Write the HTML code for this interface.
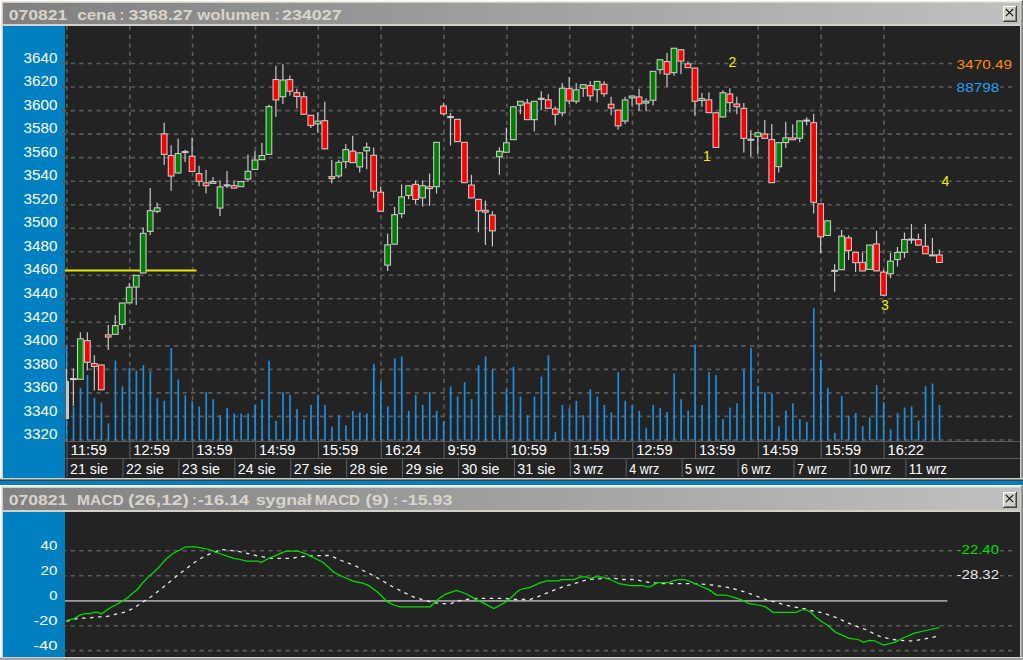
<!DOCTYPE html>
<html><head><meta charset="utf-8">
<style>
html,body{margin:0;padding:0;background:#ffffff;width:1023px;height:660px;overflow:hidden;}
svg{display:block;}
text{font-family:"Liberation Sans", sans-serif;}
</style></head><body>
<svg width="1023" height="660" viewBox="0 0 1023 660">
<defs>
<linearGradient id="tg" x1="0" x2="1" y1="0" y2="0">
<stop offset="0" stop-color="#808080"/><stop offset="1" stop-color="#c0c0c0"/>
</linearGradient>
<clipPath id="c1"><rect x="65" y="26" width="955" height="415"/></clipPath>
<clipPath id="c2"><rect x="65" y="512" width="955" height="145"/></clipPath>
</defs>
<g shape-rendering="crispEdges">

<rect x="0" y="0" width="1023" height="481" fill="#d4d0c8"/>
<rect x="0" y="0" width="2" height="481" fill="#ffffff"/>
<rect x="0" y="0" width="1023" height="2" fill="#ffffff"/>
<rect x="1" y="1" width="1" height="480" fill="#ece9e2"/>
<rect x="1" y="1" width="1021" height="1" fill="#ece9e2"/>
<rect x="1021" y="1" width="1" height="480" fill="#a0a0a0"/>
<rect x="1022" y="0" width="1" height="481" fill="#808080"/>
<rect x="3" y="3" width="1017" height="21" fill="url(#tg)"/>
<rect x="3" y="26" width="62" height="452" fill="#0080c0"/>
<rect x="65" y="26" width="955" height="452" fill="#232323"/>
<rect x="0" y="478" width="1023" height="1" fill="#d4d0c8"/>
<rect x="0" y="479" width="1023" height="1" fill="#808080"/>
<rect x="0" y="480" width="1023" height="1" fill="#404040"/>
<rect x="0" y="481" width="1023" height="4" fill="#0080c0"/>
<rect x="0" y="485" width="1023" height="175" fill="#d4d0c8"/>
<rect x="0" y="485" width="2" height="175" fill="#ffffff"/>
<rect x="0" y="485" width="1023" height="2" fill="#ffffff"/>
<rect x="1" y="486" width="1" height="174" fill="#ece9e2"/>
<rect x="1" y="486" width="1021" height="1" fill="#ece9e2"/>
<rect x="1021" y="486" width="1" height="174" fill="#a0a0a0"/>
<rect x="1022" y="485" width="1" height="175" fill="#808080"/>
<rect x="3" y="488" width="1017" height="22" fill="url(#tg)"/>
<rect x="3" y="512" width="62" height="145" fill="#0080c0"/>
<rect x="65" y="512" width="955" height="145" fill="#232323"/>
<rect x="0" y="657" width="1023" height="1" fill="#d4d0c8"/>
<rect x="0" y="658" width="1023" height="2" fill="#a0a0a0"/>
<rect x="1003" y="6" width="14" height="16" fill="#404040"/>
<rect x="1003" y="6" width="13" height="15" fill="#ffffff"/>
<rect x="1004" y="7" width="12" height="14" fill="#808080"/>
<rect x="1004" y="7" width="11" height="13" fill="#d4d0c8"/>
<path d="M1005.8 9 L1013.2 16.2 M1013.2 9 L1005.8 16.2" stroke="#111" stroke-width="1.05" shape-rendering="geometricPrecision"/>
<rect x="1003" y="492" width="14" height="16" fill="#404040"/>
<rect x="1003" y="492" width="13" height="15" fill="#ffffff"/>
<rect x="1004" y="493" width="12" height="14" fill="#808080"/>
<rect x="1004" y="493" width="11" height="13" fill="#d4d0c8"/>
<path d="M1005.8 495 L1013.2 502.2 M1013.2 495 L1005.8 502.2" stroke="#111" stroke-width="1.05" shape-rendering="geometricPrecision"/>
</g>
<text x="8.8" y="19.8" font-size="15" font-weight="bold" fill="#d8d4cc" textLength="58.5" lengthAdjust="spacingAndGlyphs">070821</text>
<text x="77.2" y="19.8" font-size="15" font-weight="bold" fill="#d8d4cc" textLength="38.8" lengthAdjust="spacingAndGlyphs">cena</text>
<text x="119.60000000000001" y="19.8" font-size="15" font-weight="bold" fill="#d8d4cc" textLength="4.6" lengthAdjust="spacingAndGlyphs">:</text>
<text x="128.5" y="19.8" font-size="15" font-weight="bold" fill="#d8d4cc" textLength="64.1" lengthAdjust="spacingAndGlyphs">3368.27</text>
<text x="197.20000000000002" y="19.8" font-size="15" font-weight="bold" fill="#d8d4cc" textLength="72.8" lengthAdjust="spacingAndGlyphs">wolumen</text>
<text x="275.0" y="19.8" font-size="15" font-weight="bold" fill="#d8d4cc" textLength="4.6" lengthAdjust="spacingAndGlyphs">:</text>
<text x="282.0" y="19.8" font-size="15" font-weight="bold" fill="#d8d4cc" textLength="59.6" lengthAdjust="spacingAndGlyphs">234027</text>
<text x="8.8" y="505" font-size="15" font-weight="bold" fill="#d8d4cc" textLength="58.5" lengthAdjust="spacingAndGlyphs">070821</text>
<text x="77.0" y="505" font-size="15" font-weight="bold" fill="#d8d4cc" textLength="46.7" lengthAdjust="spacingAndGlyphs">MACD</text>
<text x="128.1" y="505" font-size="15" font-weight="bold" fill="#d8d4cc" textLength="60.7" lengthAdjust="spacingAndGlyphs">(26,12)</text>
<text x="192.20000000000002" y="505" font-size="15" font-weight="bold" fill="#d8d4cc" textLength="4.4" lengthAdjust="spacingAndGlyphs">:</text>
<text x="197.8" y="505" font-size="15" font-weight="bold" fill="#d8d4cc" textLength="51.4" lengthAdjust="spacingAndGlyphs">-16.14</text>
<text x="255.70000000000002" y="505" font-size="15" font-weight="bold" fill="#d8d4cc" textLength="56.1" lengthAdjust="spacingAndGlyphs">sygnał</text>
<text x="314.7" y="505" font-size="15" font-weight="bold" fill="#d8d4cc" textLength="45.3" lengthAdjust="spacingAndGlyphs">MACD</text>
<text x="365.2" y="505" font-size="15" font-weight="bold" fill="#d8d4cc" textLength="23.8" lengthAdjust="spacingAndGlyphs">(9)</text>
<text x="393.2" y="505" font-size="15" font-weight="bold" fill="#d8d4cc" textLength="4.4" lengthAdjust="spacingAndGlyphs">:</text>
<text x="401.79999999999995" y="505" font-size="15" font-weight="bold" fill="#d8d4cc" textLength="50.6" lengthAdjust="spacingAndGlyphs">-15.93</text>
<g shape-rendering="crispEdges">
<line x1="62" y1="63.5" x2="1016" y2="63.5" stroke="#5c5c5c" stroke-width="1.6" stroke-dasharray="4.3 4.3" shape-rendering="geometricPrecision"/>
<line x1="62" y1="87.0" x2="1016" y2="87.0" stroke="#5c5c5c" stroke-width="1.6" stroke-dasharray="4.3 4.3" shape-rendering="geometricPrecision"/>
<line x1="62" y1="110.6" x2="1016" y2="110.6" stroke="#5c5c5c" stroke-width="1.6" stroke-dasharray="4.3 4.3" shape-rendering="geometricPrecision"/>
<line x1="62" y1="134.1" x2="1016" y2="134.1" stroke="#5c5c5c" stroke-width="1.6" stroke-dasharray="4.3 4.3" shape-rendering="geometricPrecision"/>
<line x1="62" y1="157.6" x2="1016" y2="157.6" stroke="#5c5c5c" stroke-width="1.6" stroke-dasharray="4.3 4.3" shape-rendering="geometricPrecision"/>
<line x1="62" y1="181.2" x2="1016" y2="181.2" stroke="#5c5c5c" stroke-width="1.6" stroke-dasharray="4.3 4.3" shape-rendering="geometricPrecision"/>
<line x1="62" y1="204.7" x2="1016" y2="204.7" stroke="#5c5c5c" stroke-width="1.6" stroke-dasharray="4.3 4.3" shape-rendering="geometricPrecision"/>
<line x1="62" y1="228.2" x2="1016" y2="228.2" stroke="#5c5c5c" stroke-width="1.6" stroke-dasharray="4.3 4.3" shape-rendering="geometricPrecision"/>
<line x1="62" y1="251.7" x2="1016" y2="251.7" stroke="#5c5c5c" stroke-width="1.6" stroke-dasharray="4.3 4.3" shape-rendering="geometricPrecision"/>
<line x1="62" y1="275.3" x2="1016" y2="275.3" stroke="#5c5c5c" stroke-width="1.6" stroke-dasharray="4.3 4.3" shape-rendering="geometricPrecision"/>
<line x1="62" y1="298.8" x2="1016" y2="298.8" stroke="#5c5c5c" stroke-width="1.6" stroke-dasharray="4.3 4.3" shape-rendering="geometricPrecision"/>
<line x1="62" y1="322.3" x2="1016" y2="322.3" stroke="#5c5c5c" stroke-width="1.6" stroke-dasharray="4.3 4.3" shape-rendering="geometricPrecision"/>
<line x1="62" y1="345.9" x2="1016" y2="345.9" stroke="#5c5c5c" stroke-width="1.6" stroke-dasharray="4.3 4.3" shape-rendering="geometricPrecision"/>
<line x1="62" y1="369.4" x2="1016" y2="369.4" stroke="#5c5c5c" stroke-width="1.6" stroke-dasharray="4.3 4.3" shape-rendering="geometricPrecision"/>
<line x1="62" y1="392.9" x2="1016" y2="392.9" stroke="#5c5c5c" stroke-width="1.6" stroke-dasharray="4.3 4.3" shape-rendering="geometricPrecision"/>
<line x1="62" y1="416.4" x2="1016" y2="416.4" stroke="#5c5c5c" stroke-width="1.6" stroke-dasharray="4.3 4.3" shape-rendering="geometricPrecision"/>
<line x1="62" y1="440.0" x2="1016" y2="440.0" stroke="#5c5c5c" stroke-width="1.6" stroke-dasharray="4.3 4.3" shape-rendering="geometricPrecision"/>
<line x1="66.9" y1="26" x2="66.9" y2="441" stroke="#5c5c5c" stroke-width="1.6" stroke-dasharray="4.3 4.3" shape-rendering="geometricPrecision"/>
<line x1="129.8" y1="26" x2="129.8" y2="441" stroke="#5c5c5c" stroke-width="1.6" stroke-dasharray="4.3 4.3" shape-rendering="geometricPrecision"/>
<line x1="192.6" y1="26" x2="192.6" y2="441" stroke="#5c5c5c" stroke-width="1.6" stroke-dasharray="4.3 4.3" shape-rendering="geometricPrecision"/>
<line x1="255.5" y1="26" x2="255.5" y2="441" stroke="#5c5c5c" stroke-width="1.6" stroke-dasharray="4.3 4.3" shape-rendering="geometricPrecision"/>
<line x1="318.3" y1="26" x2="318.3" y2="441" stroke="#5c5c5c" stroke-width="1.6" stroke-dasharray="4.3 4.3" shape-rendering="geometricPrecision"/>
<line x1="381.1" y1="26" x2="381.1" y2="441" stroke="#5c5c5c" stroke-width="1.6" stroke-dasharray="4.3 4.3" shape-rendering="geometricPrecision"/>
<line x1="444.0" y1="26" x2="444.0" y2="441" stroke="#5c5c5c" stroke-width="1.6" stroke-dasharray="4.3 4.3" shape-rendering="geometricPrecision"/>
<line x1="506.9" y1="26" x2="506.9" y2="441" stroke="#5c5c5c" stroke-width="1.6" stroke-dasharray="4.3 4.3" shape-rendering="geometricPrecision"/>
<line x1="569.7" y1="26" x2="569.7" y2="441" stroke="#5c5c5c" stroke-width="1.6" stroke-dasharray="4.3 4.3" shape-rendering="geometricPrecision"/>
<line x1="632.5" y1="26" x2="632.5" y2="441" stroke="#5c5c5c" stroke-width="1.6" stroke-dasharray="4.3 4.3" shape-rendering="geometricPrecision"/>
<line x1="695.4" y1="26" x2="695.4" y2="441" stroke="#5c5c5c" stroke-width="1.6" stroke-dasharray="4.3 4.3" shape-rendering="geometricPrecision"/>
<line x1="758.2" y1="26" x2="758.2" y2="441" stroke="#5c5c5c" stroke-width="1.6" stroke-dasharray="4.3 4.3" shape-rendering="geometricPrecision"/>
<line x1="821.1" y1="26" x2="821.1" y2="441" stroke="#5c5c5c" stroke-width="1.6" stroke-dasharray="4.3 4.3" shape-rendering="geometricPrecision"/>
<line x1="884.0" y1="26" x2="884.0" y2="441" stroke="#5c5c5c" stroke-width="1.6" stroke-dasharray="4.3 4.3" shape-rendering="geometricPrecision"/>
</g>
<rect x="65" y="269.5" width="131.5" height="2" fill="#e6e600"/>
<g clip-path="url(#c1)">
<rect x="65.68" y="346.4" width="1.7" height="94.1" fill="#1a8ee2"/>
<rect x="72.66" y="406.5" width="1.7" height="34.0" fill="#1a8ee2"/>
<rect x="79.65" y="387.7" width="1.7" height="52.8" fill="#1a8ee2"/>
<rect x="86.63" y="375.0" width="1.7" height="65.5" fill="#1a8ee2"/>
<rect x="93.62" y="398.0" width="1.7" height="42.5" fill="#1a8ee2"/>
<rect x="100.60" y="402.4" width="1.7" height="38.1" fill="#1a8ee2"/>
<rect x="107.58" y="423.5" width="1.7" height="17.0" fill="#1a8ee2"/>
<rect x="114.57" y="360.7" width="1.7" height="79.8" fill="#1a8ee2"/>
<rect x="121.55" y="386.5" width="1.7" height="54.0" fill="#1a8ee2"/>
<rect x="128.54" y="367.8" width="1.7" height="72.7" fill="#1a8ee2"/>
<rect x="135.52" y="370.5" width="1.7" height="70.0" fill="#1a8ee2"/>
<rect x="142.50" y="365.1" width="1.7" height="75.4" fill="#1a8ee2"/>
<rect x="149.49" y="370.7" width="1.7" height="69.8" fill="#1a8ee2"/>
<rect x="156.47" y="398.0" width="1.7" height="42.5" fill="#1a8ee2"/>
<rect x="163.46" y="400.8" width="1.7" height="39.7" fill="#1a8ee2"/>
<rect x="170.44" y="348.0" width="1.7" height="92.5" fill="#1a8ee2"/>
<rect x="177.42" y="379.5" width="1.7" height="61.0" fill="#1a8ee2"/>
<rect x="184.41" y="395.2" width="1.7" height="45.3" fill="#1a8ee2"/>
<rect x="191.39" y="400.8" width="1.7" height="39.7" fill="#1a8ee2"/>
<rect x="198.38" y="406.5" width="1.7" height="34.0" fill="#1a8ee2"/>
<rect x="205.36" y="392.2" width="1.7" height="48.3" fill="#1a8ee2"/>
<rect x="212.34" y="399.3" width="1.7" height="41.2" fill="#1a8ee2"/>
<rect x="219.33" y="415.1" width="1.7" height="25.4" fill="#1a8ee2"/>
<rect x="226.31" y="408.1" width="1.7" height="32.4" fill="#1a8ee2"/>
<rect x="233.30" y="413.5" width="1.7" height="27.0" fill="#1a8ee2"/>
<rect x="240.28" y="413.5" width="1.7" height="27.0" fill="#1a8ee2"/>
<rect x="247.26" y="413.5" width="1.7" height="27.0" fill="#1a8ee2"/>
<rect x="254.25" y="404.9" width="1.7" height="35.6" fill="#1a8ee2"/>
<rect x="261.23" y="399.3" width="1.7" height="41.2" fill="#1a8ee2"/>
<rect x="268.22" y="360.7" width="1.7" height="79.8" fill="#1a8ee2"/>
<rect x="275.20" y="420.8" width="1.7" height="19.7" fill="#1a8ee2"/>
<rect x="282.18" y="392.2" width="1.7" height="48.3" fill="#1a8ee2"/>
<rect x="289.17" y="394.9" width="1.7" height="45.6" fill="#1a8ee2"/>
<rect x="296.15" y="409.2" width="1.7" height="31.3" fill="#1a8ee2"/>
<rect x="303.14" y="419.2" width="1.7" height="21.3" fill="#1a8ee2"/>
<rect x="310.12" y="404.9" width="1.7" height="35.6" fill="#1a8ee2"/>
<rect x="317.10" y="394.9" width="1.7" height="45.6" fill="#1a8ee2"/>
<rect x="324.09" y="404.9" width="1.7" height="35.6" fill="#1a8ee2"/>
<rect x="331.07" y="426.7" width="1.7" height="13.8" fill="#1a8ee2"/>
<rect x="338.06" y="415.1" width="1.7" height="25.4" fill="#1a8ee2"/>
<rect x="345.04" y="425.1" width="1.7" height="15.4" fill="#1a8ee2"/>
<rect x="352.02" y="410.8" width="1.7" height="29.7" fill="#1a8ee2"/>
<rect x="359.01" y="412.4" width="1.7" height="28.1" fill="#1a8ee2"/>
<rect x="365.99" y="413.5" width="1.7" height="27.0" fill="#1a8ee2"/>
<rect x="372.98" y="363.9" width="1.7" height="76.6" fill="#1a8ee2"/>
<rect x="379.96" y="382.2" width="1.7" height="58.3" fill="#1a8ee2"/>
<rect x="386.94" y="406.5" width="1.7" height="34.0" fill="#1a8ee2"/>
<rect x="393.93" y="358.3" width="1.7" height="82.2" fill="#1a8ee2"/>
<rect x="400.91" y="356.4" width="1.7" height="84.1" fill="#1a8ee2"/>
<rect x="407.90" y="410.8" width="1.7" height="29.7" fill="#1a8ee2"/>
<rect x="414.88" y="394.9" width="1.7" height="45.6" fill="#1a8ee2"/>
<rect x="421.86" y="404.9" width="1.7" height="35.6" fill="#1a8ee2"/>
<rect x="428.85" y="392.2" width="1.7" height="48.3" fill="#1a8ee2"/>
<rect x="435.83" y="410.8" width="1.7" height="29.7" fill="#1a8ee2"/>
<rect x="442.82" y="420.8" width="1.7" height="19.7" fill="#1a8ee2"/>
<rect x="449.80" y="386.5" width="1.7" height="54.0" fill="#1a8ee2"/>
<rect x="456.78" y="396.5" width="1.7" height="44.0" fill="#1a8ee2"/>
<rect x="463.77" y="382.2" width="1.7" height="58.3" fill="#1a8ee2"/>
<rect x="470.75" y="399.2" width="1.7" height="41.3" fill="#1a8ee2"/>
<rect x="477.74" y="365.1" width="1.7" height="75.4" fill="#1a8ee2"/>
<rect x="484.72" y="356.4" width="1.7" height="84.1" fill="#1a8ee2"/>
<rect x="491.70" y="369.0" width="1.7" height="71.5" fill="#1a8ee2"/>
<rect x="498.69" y="415.1" width="1.7" height="25.4" fill="#1a8ee2"/>
<rect x="505.67" y="389.3" width="1.7" height="51.2" fill="#1a8ee2"/>
<rect x="512.66" y="366.7" width="1.7" height="73.8" fill="#1a8ee2"/>
<rect x="519.64" y="396.5" width="1.7" height="44.0" fill="#1a8ee2"/>
<rect x="526.62" y="415.1" width="1.7" height="25.4" fill="#1a8ee2"/>
<rect x="533.61" y="396.5" width="1.7" height="44.0" fill="#1a8ee2"/>
<rect x="540.59" y="376.6" width="1.7" height="63.9" fill="#1a8ee2"/>
<rect x="547.58" y="355.1" width="1.7" height="85.4" fill="#1a8ee2"/>
<rect x="554.56" y="432.0" width="1.7" height="8.5" fill="#1a8ee2"/>
<rect x="561.54" y="404.9" width="1.7" height="35.6" fill="#1a8ee2"/>
<rect x="568.53" y="408.1" width="1.7" height="32.4" fill="#1a8ee2"/>
<rect x="575.51" y="400.8" width="1.7" height="39.7" fill="#1a8ee2"/>
<rect x="582.50" y="415.1" width="1.7" height="25.4" fill="#1a8ee2"/>
<rect x="589.48" y="389.3" width="1.7" height="51.2" fill="#1a8ee2"/>
<rect x="596.46" y="396.5" width="1.7" height="44.0" fill="#1a8ee2"/>
<rect x="603.45" y="404.9" width="1.7" height="35.6" fill="#1a8ee2"/>
<rect x="610.43" y="412.4" width="1.7" height="28.1" fill="#1a8ee2"/>
<rect x="617.42" y="372.1" width="1.7" height="68.4" fill="#1a8ee2"/>
<rect x="624.40" y="400.8" width="1.7" height="39.7" fill="#1a8ee2"/>
<rect x="631.38" y="404.9" width="1.7" height="35.6" fill="#1a8ee2"/>
<rect x="638.37" y="410.8" width="1.7" height="29.7" fill="#1a8ee2"/>
<rect x="645.35" y="427.8" width="1.7" height="12.7" fill="#1a8ee2"/>
<rect x="652.34" y="404.9" width="1.7" height="35.6" fill="#1a8ee2"/>
<rect x="659.32" y="408.1" width="1.7" height="32.4" fill="#1a8ee2"/>
<rect x="666.30" y="411.9" width="1.7" height="28.6" fill="#1a8ee2"/>
<rect x="673.29" y="373.6" width="1.7" height="66.9" fill="#1a8ee2"/>
<rect x="680.27" y="399.3" width="1.7" height="41.2" fill="#1a8ee2"/>
<rect x="687.26" y="410.5" width="1.7" height="30.0" fill="#1a8ee2"/>
<rect x="694.24" y="345.0" width="1.7" height="95.5" fill="#1a8ee2"/>
<rect x="701.22" y="405.0" width="1.7" height="35.5" fill="#1a8ee2"/>
<rect x="708.21" y="372.1" width="1.7" height="68.4" fill="#1a8ee2"/>
<rect x="715.19" y="375.1" width="1.7" height="65.4" fill="#1a8ee2"/>
<rect x="722.18" y="419.1" width="1.7" height="21.4" fill="#1a8ee2"/>
<rect x="729.16" y="407.6" width="1.7" height="32.9" fill="#1a8ee2"/>
<rect x="736.14" y="403.3" width="1.7" height="37.2" fill="#1a8ee2"/>
<rect x="743.13" y="369.2" width="1.7" height="71.3" fill="#1a8ee2"/>
<rect x="750.11" y="347.9" width="1.7" height="92.6" fill="#1a8ee2"/>
<rect x="757.10" y="386.1" width="1.7" height="54.4" fill="#1a8ee2"/>
<rect x="764.08" y="392.3" width="1.7" height="48.2" fill="#1a8ee2"/>
<rect x="771.06" y="393.4" width="1.7" height="47.1" fill="#1a8ee2"/>
<rect x="778.05" y="426.3" width="1.7" height="14.2" fill="#1a8ee2"/>
<rect x="785.03" y="410.5" width="1.7" height="30.0" fill="#1a8ee2"/>
<rect x="792.02" y="403.3" width="1.7" height="37.2" fill="#1a8ee2"/>
<rect x="799.00" y="419.1" width="1.7" height="21.4" fill="#1a8ee2"/>
<rect x="805.98" y="421.9" width="1.7" height="18.6" fill="#1a8ee2"/>
<rect x="812.97" y="308.3" width="1.7" height="132.2" fill="#1a8ee2"/>
<rect x="819.95" y="359.8" width="1.7" height="80.7" fill="#1a8ee2"/>
<rect x="826.94" y="387.9" width="1.7" height="52.6" fill="#1a8ee2"/>
<rect x="833.92" y="432.9" width="1.7" height="7.6" fill="#1a8ee2"/>
<rect x="840.90" y="396.2" width="1.7" height="44.3" fill="#1a8ee2"/>
<rect x="847.89" y="415.8" width="1.7" height="24.7" fill="#1a8ee2"/>
<rect x="854.87" y="413.1" width="1.7" height="27.4" fill="#1a8ee2"/>
<rect x="861.86" y="426.3" width="1.7" height="14.2" fill="#1a8ee2"/>
<rect x="868.84" y="417.5" width="1.7" height="23.0" fill="#1a8ee2"/>
<rect x="875.82" y="385.0" width="1.7" height="55.5" fill="#1a8ee2"/>
<rect x="882.81" y="402.2" width="1.7" height="38.3" fill="#1a8ee2"/>
<rect x="889.79" y="429.2" width="1.7" height="11.3" fill="#1a8ee2"/>
<rect x="896.78" y="413.1" width="1.7" height="27.4" fill="#1a8ee2"/>
<rect x="903.76" y="407.6" width="1.7" height="32.9" fill="#1a8ee2"/>
<rect x="910.74" y="406.5" width="1.7" height="34.0" fill="#1a8ee2"/>
<rect x="917.73" y="420.4" width="1.7" height="20.1" fill="#1a8ee2"/>
<rect x="924.71" y="386.3" width="1.7" height="54.2" fill="#1a8ee2"/>
<rect x="931.70" y="383.5" width="1.7" height="57.0" fill="#1a8ee2"/>
<rect x="938.68" y="405.0" width="1.7" height="35.5" fill="#1a8ee2"/>
<rect x="65.78" y="369.0" width="1.2" height="50.0" fill="#c8c8c8"/>
<rect x="67" y="381.0" width="2" height="38.0" fill="#c8c8c8"/>
<rect x="72.76" y="368.6" width="1.2" height="37.4" fill="#c8c8c8"/>
<rect x="69.96" y="378.0" width="6.8" height="2.1" fill="#c8c8c8"/>
<rect x="79.75" y="332.3" width="1.2" height="47.3" fill="#c8c8c8"/>
<rect x="76.95" y="338.3" width="6.8" height="41.5" fill="#c8c8c8"/>
<rect x="78.05" y="339.4" width="4.6" height="39.3" fill="#008000"/>
<rect x="86.73" y="332.3" width="1.2" height="38.2" fill="#c8c8c8"/>
<rect x="83.93" y="340.1" width="6.8" height="22.7" fill="#c8c8c8"/>
<rect x="85.03" y="341.2" width="4.6" height="20.5" fill="#ff0000"/>
<rect x="93.72" y="355.3" width="1.2" height="35.2" fill="#c8c8c8"/>
<rect x="90.92" y="363.0" width="6.8" height="4.0" fill="#c8c8c8"/>
<rect x="92.02" y="364.1" width="4.6" height="1.8" fill="#ff0000"/>
<rect x="100.70" y="364.6" width="1.2" height="25.5" fill="#c8c8c8"/>
<rect x="97.90" y="364.4" width="6.8" height="25.9" fill="#c8c8c8"/>
<rect x="99.00" y="365.5" width="4.6" height="23.7" fill="#ff0000"/>
<rect x="107.68" y="325.0" width="1.2" height="25.0" fill="#c8c8c8"/>
<rect x="104.88" y="334.3" width="6.8" height="3.3" fill="#c8c8c8"/>
<rect x="105.98" y="335.4" width="4.6" height="1.1" fill="#ff0000"/>
<rect x="114.67" y="315.0" width="1.2" height="19.7" fill="#c8c8c8"/>
<rect x="111.87" y="325.1" width="6.8" height="9.8" fill="#c8c8c8"/>
<rect x="112.97" y="326.2" width="4.6" height="7.6" fill="#008000"/>
<rect x="121.65" y="302.7" width="1.2" height="26.6" fill="#c8c8c8"/>
<rect x="118.85" y="302.5" width="6.8" height="22.5" fill="#c8c8c8"/>
<rect x="119.95" y="303.6" width="4.6" height="20.3" fill="#008000"/>
<rect x="128.64" y="283.0" width="1.2" height="20.2" fill="#c8c8c8"/>
<rect x="125.84" y="286.7" width="6.8" height="16.7" fill="#c8c8c8"/>
<rect x="126.94" y="287.8" width="4.6" height="14.5" fill="#008000"/>
<rect x="135.62" y="275.0" width="1.2" height="30.0" fill="#c8c8c8"/>
<rect x="132.82" y="274.8" width="6.8" height="12.8" fill="#c8c8c8"/>
<rect x="133.92" y="275.9" width="4.6" height="10.6" fill="#008000"/>
<rect x="142.60" y="227.5" width="1.2" height="45.8" fill="#c8c8c8"/>
<rect x="139.80" y="232.8" width="6.8" height="40.7" fill="#c8c8c8"/>
<rect x="140.90" y="233.9" width="4.6" height="38.5" fill="#008000"/>
<rect x="149.59" y="188.0" width="1.2" height="47.0" fill="#c8c8c8"/>
<rect x="146.79" y="210.1" width="6.8" height="21.8" fill="#c8c8c8"/>
<rect x="147.89" y="211.2" width="4.6" height="19.6" fill="#008000"/>
<rect x="156.57" y="202.5" width="1.2" height="10.8" fill="#c8c8c8"/>
<rect x="153.77" y="207.3" width="6.8" height="4.6" fill="#c8c8c8"/>
<rect x="154.87" y="208.4" width="4.6" height="2.4" fill="#008000"/>
<rect x="163.56" y="122.6" width="1.2" height="42.4" fill="#c8c8c8"/>
<rect x="160.76" y="133.3" width="6.8" height="21.6" fill="#c8c8c8"/>
<rect x="161.86" y="134.4" width="4.6" height="19.4" fill="#ff0000"/>
<rect x="170.54" y="145.3" width="1.2" height="45.5" fill="#c8c8c8"/>
<rect x="167.74" y="155.0" width="6.8" height="21.6" fill="#c8c8c8"/>
<rect x="168.84" y="156.1" width="4.6" height="19.4" fill="#ff0000"/>
<rect x="177.52" y="138.5" width="1.2" height="34.8" fill="#c8c8c8"/>
<rect x="174.72" y="153.0" width="6.8" height="20.5" fill="#c8c8c8"/>
<rect x="175.82" y="154.1" width="4.6" height="18.3" fill="#008000"/>
<rect x="184.51" y="149.8" width="1.2" height="12.2" fill="#c8c8c8"/>
<rect x="181.71" y="151.0" width="6.8" height="2.1" fill="#c8c8c8"/>
<rect x="191.49" y="137.7" width="1.2" height="34.1" fill="#c8c8c8"/>
<rect x="188.69" y="155.7" width="6.8" height="16.3" fill="#c8c8c8"/>
<rect x="189.79" y="156.8" width="4.6" height="14.1" fill="#ff0000"/>
<rect x="198.48" y="165.8" width="1.2" height="20.4" fill="#c8c8c8"/>
<rect x="195.68" y="173.1" width="6.8" height="8.8" fill="#c8c8c8"/>
<rect x="196.78" y="174.2" width="4.6" height="6.6" fill="#ff0000"/>
<rect x="205.46" y="170.0" width="1.2" height="23.4" fill="#c8c8c8"/>
<rect x="202.66" y="182.3" width="6.8" height="3.9" fill="#c8c8c8"/>
<rect x="203.76" y="183.4" width="4.6" height="1.7" fill="#ff0000"/>
<rect x="212.44" y="177.0" width="1.2" height="6.2" fill="#c8c8c8"/>
<rect x="209.64" y="181.0" width="6.8" height="2.9" fill="#c8c8c8"/>
<rect x="210.74" y="182.1" width="4.6" height="0.7" fill="#008000"/>
<rect x="219.43" y="180.5" width="1.2" height="35.5" fill="#c8c8c8"/>
<rect x="216.63" y="186.4" width="6.8" height="22.2" fill="#c8c8c8"/>
<rect x="217.73" y="187.5" width="4.6" height="20.0" fill="#008000"/>
<rect x="226.41" y="171.0" width="1.2" height="17.0" fill="#c8c8c8"/>
<rect x="223.61" y="184.3" width="6.8" height="2.1" fill="#c8c8c8"/>
<rect x="233.40" y="180.5" width="1.2" height="7.9" fill="#c8c8c8"/>
<rect x="230.60" y="185.1" width="6.8" height="3.5" fill="#c8c8c8"/>
<rect x="231.70" y="186.2" width="4.6" height="1.3" fill="#ff0000"/>
<rect x="240.38" y="181.2" width="1.2" height="5.8" fill="#c8c8c8"/>
<rect x="237.58" y="181.0" width="6.8" height="6.2" fill="#c8c8c8"/>
<rect x="238.68" y="182.1" width="4.6" height="4.0" fill="#008000"/>
<rect x="247.36" y="154.6" width="1.2" height="27.2" fill="#c8c8c8"/>
<rect x="244.56" y="170.8" width="6.8" height="8.8" fill="#c8c8c8"/>
<rect x="245.66" y="171.9" width="4.6" height="6.6" fill="#008000"/>
<rect x="254.35" y="151.0" width="1.2" height="18.8" fill="#c8c8c8"/>
<rect x="251.55" y="159.5" width="6.8" height="10.5" fill="#c8c8c8"/>
<rect x="252.65" y="160.6" width="4.6" height="8.3" fill="#008000"/>
<rect x="261.33" y="143.0" width="1.2" height="17.0" fill="#c8c8c8"/>
<rect x="258.53" y="155.0" width="6.8" height="5.2" fill="#c8c8c8"/>
<rect x="259.63" y="156.1" width="4.6" height="3.0" fill="#008000"/>
<rect x="268.32" y="104.7" width="1.2" height="50.0" fill="#c8c8c8"/>
<rect x="265.52" y="106.0" width="6.8" height="48.9" fill="#c8c8c8"/>
<rect x="266.62" y="107.1" width="4.6" height="46.7" fill="#008000"/>
<rect x="275.30" y="65.8" width="1.2" height="51.0" fill="#c8c8c8"/>
<rect x="272.50" y="79.0" width="6.8" height="21.4" fill="#c8c8c8"/>
<rect x="273.60" y="80.1" width="4.6" height="19.2" fill="#ff0000"/>
<rect x="282.28" y="64.2" width="1.2" height="39.8" fill="#c8c8c8"/>
<rect x="279.48" y="79.5" width="6.8" height="17.8" fill="#c8c8c8"/>
<rect x="280.58" y="80.6" width="4.6" height="15.6" fill="#008000"/>
<rect x="289.27" y="75.6" width="1.2" height="20.0" fill="#c8c8c8"/>
<rect x="286.47" y="79.0" width="6.8" height="12.7" fill="#c8c8c8"/>
<rect x="287.57" y="80.1" width="4.6" height="10.5" fill="#ff0000"/>
<rect x="296.25" y="88.8" width="1.2" height="19.7" fill="#c8c8c8"/>
<rect x="293.45" y="92.1" width="6.8" height="4.9" fill="#c8c8c8"/>
<rect x="294.55" y="93.2" width="4.6" height="2.7" fill="#ff0000"/>
<rect x="303.24" y="91.8" width="1.2" height="22.8" fill="#c8c8c8"/>
<rect x="300.44" y="96.2" width="6.8" height="18.6" fill="#c8c8c8"/>
<rect x="301.54" y="97.3" width="4.6" height="16.4" fill="#ff0000"/>
<rect x="310.22" y="115.0" width="1.2" height="13.0" fill="#c8c8c8"/>
<rect x="307.42" y="114.8" width="6.8" height="11.2" fill="#c8c8c8"/>
<rect x="308.52" y="115.9" width="4.6" height="9.0" fill="#ff0000"/>
<rect x="317.20" y="112.5" width="1.2" height="20.0" fill="#c8c8c8"/>
<rect x="314.40" y="120.6" width="6.8" height="3.8" fill="#c8c8c8"/>
<rect x="315.50" y="121.7" width="4.6" height="1.6" fill="#008000"/>
<rect x="324.19" y="101.7" width="1.2" height="47.5" fill="#c8c8c8"/>
<rect x="321.39" y="120.1" width="6.8" height="29.3" fill="#c8c8c8"/>
<rect x="322.49" y="121.2" width="4.6" height="27.1" fill="#ff0000"/>
<rect x="331.17" y="160.0" width="1.2" height="23.3" fill="#c8c8c8"/>
<rect x="328.37" y="176.1" width="6.8" height="2.9" fill="#c8c8c8"/>
<rect x="329.47" y="177.2" width="4.6" height="0.7" fill="#ff0000"/>
<rect x="338.16" y="160.0" width="1.2" height="18.0" fill="#c8c8c8"/>
<rect x="335.36" y="161.8" width="6.8" height="14.7" fill="#c8c8c8"/>
<rect x="336.46" y="162.9" width="4.6" height="12.5" fill="#008000"/>
<rect x="345.14" y="144.2" width="1.2" height="24.1" fill="#c8c8c8"/>
<rect x="342.34" y="149.0" width="6.8" height="13.2" fill="#c8c8c8"/>
<rect x="343.44" y="150.1" width="4.6" height="11.0" fill="#008000"/>
<rect x="352.12" y="135.8" width="1.2" height="27.2" fill="#c8c8c8"/>
<rect x="349.32" y="150.6" width="6.8" height="12.6" fill="#c8c8c8"/>
<rect x="350.42" y="151.7" width="4.6" height="10.4" fill="#ff0000"/>
<rect x="359.11" y="152.5" width="1.2" height="20.0" fill="#c8c8c8"/>
<rect x="356.31" y="152.3" width="6.8" height="15.1" fill="#c8c8c8"/>
<rect x="357.41" y="153.4" width="4.6" height="12.9" fill="#008000"/>
<rect x="366.09" y="142.5" width="1.2" height="26.7" fill="#c8c8c8"/>
<rect x="363.29" y="146.8" width="6.8" height="4.6" fill="#c8c8c8"/>
<rect x="364.39" y="147.9" width="4.6" height="2.4" fill="#008000"/>
<rect x="373.08" y="147.5" width="1.2" height="50.7" fill="#c8c8c8"/>
<rect x="370.28" y="154.8" width="6.8" height="36.9" fill="#c8c8c8"/>
<rect x="371.38" y="155.9" width="4.6" height="34.7" fill="#ff0000"/>
<rect x="380.06" y="186.4" width="1.2" height="25.2" fill="#c8c8c8"/>
<rect x="377.26" y="191.7" width="6.8" height="20.1" fill="#c8c8c8"/>
<rect x="378.36" y="192.8" width="4.6" height="17.9" fill="#ff0000"/>
<rect x="387.04" y="233.6" width="1.2" height="37.4" fill="#c8c8c8"/>
<rect x="384.24" y="244.3" width="6.8" height="21.4" fill="#c8c8c8"/>
<rect x="385.34" y="245.4" width="4.6" height="19.2" fill="#008000"/>
<rect x="394.03" y="207.0" width="1.2" height="37.5" fill="#c8c8c8"/>
<rect x="391.23" y="214.1" width="6.8" height="30.6" fill="#c8c8c8"/>
<rect x="392.33" y="215.2" width="4.6" height="28.4" fill="#008000"/>
<rect x="401.01" y="184.4" width="1.2" height="33.5" fill="#c8c8c8"/>
<rect x="398.21" y="196.4" width="6.8" height="17.8" fill="#c8c8c8"/>
<rect x="399.31" y="197.5" width="4.6" height="15.6" fill="#008000"/>
<rect x="408.00" y="185.4" width="1.2" height="13.8" fill="#c8c8c8"/>
<rect x="405.20" y="185.2" width="6.8" height="10.8" fill="#c8c8c8"/>
<rect x="406.30" y="186.3" width="4.6" height="8.6" fill="#008000"/>
<rect x="414.98" y="180.5" width="1.2" height="23.5" fill="#c8c8c8"/>
<rect x="412.18" y="183.8" width="6.8" height="16.2" fill="#c8c8c8"/>
<rect x="413.28" y="184.9" width="4.6" height="14.0" fill="#ff0000"/>
<rect x="421.96" y="180.5" width="1.2" height="26.0" fill="#c8c8c8"/>
<rect x="419.16" y="185.2" width="6.8" height="13.2" fill="#c8c8c8"/>
<rect x="420.26" y="186.3" width="4.6" height="11.0" fill="#008000"/>
<rect x="428.95" y="173.6" width="1.2" height="32.4" fill="#c8c8c8"/>
<rect x="426.15" y="186.2" width="6.8" height="2.9" fill="#c8c8c8"/>
<rect x="427.25" y="187.3" width="4.6" height="0.7" fill="#ff0000"/>
<rect x="435.93" y="142.0" width="1.2" height="51.5" fill="#c8c8c8"/>
<rect x="433.13" y="141.8" width="6.8" height="45.4" fill="#c8c8c8"/>
<rect x="434.23" y="142.9" width="4.6" height="43.2" fill="#008000"/>
<rect x="442.92" y="102.8" width="1.2" height="12.7" fill="#c8c8c8"/>
<rect x="440.12" y="105.5" width="6.8" height="8.8" fill="#c8c8c8"/>
<rect x="441.22" y="106.6" width="4.6" height="6.6" fill="#ff0000"/>
<rect x="449.90" y="113.0" width="1.2" height="32.5" fill="#c8c8c8"/>
<rect x="447.10" y="116.0" width="6.8" height="2.1" fill="#c8c8c8"/>
<rect x="456.88" y="119.0" width="1.2" height="23.0" fill="#c8c8c8"/>
<rect x="454.08" y="118.8" width="6.8" height="23.4" fill="#c8c8c8"/>
<rect x="455.18" y="119.9" width="4.6" height="21.2" fill="#ff0000"/>
<rect x="463.87" y="142.0" width="1.2" height="41.0" fill="#c8c8c8"/>
<rect x="461.07" y="141.8" width="6.8" height="41.4" fill="#c8c8c8"/>
<rect x="462.17" y="142.9" width="4.6" height="39.2" fill="#ff0000"/>
<rect x="470.85" y="174.8" width="1.2" height="23.5" fill="#c8c8c8"/>
<rect x="468.05" y="184.5" width="6.8" height="14.0" fill="#c8c8c8"/>
<rect x="469.15" y="185.6" width="4.6" height="11.8" fill="#ff0000"/>
<rect x="477.84" y="199.0" width="1.2" height="33.3" fill="#c8c8c8"/>
<rect x="475.04" y="198.8" width="6.8" height="12.6" fill="#c8c8c8"/>
<rect x="476.14" y="199.9" width="4.6" height="10.4" fill="#ff0000"/>
<rect x="484.82" y="200.6" width="1.2" height="44.4" fill="#c8c8c8"/>
<rect x="482.02" y="209.8" width="6.8" height="2.9" fill="#c8c8c8"/>
<rect x="483.12" y="210.9" width="4.6" height="0.7" fill="#ff0000"/>
<rect x="491.80" y="211.2" width="1.2" height="35.2" fill="#c8c8c8"/>
<rect x="489.00" y="214.5" width="6.8" height="16.9" fill="#c8c8c8"/>
<rect x="490.10" y="215.6" width="4.6" height="14.7" fill="#ff0000"/>
<rect x="498.79" y="147.3" width="1.2" height="27.5" fill="#c8c8c8"/>
<rect x="495.99" y="150.8" width="6.8" height="6.4" fill="#c8c8c8"/>
<rect x="497.09" y="151.9" width="4.6" height="4.2" fill="#008000"/>
<rect x="505.77" y="127.6" width="1.2" height="25.0" fill="#c8c8c8"/>
<rect x="502.97" y="142.2" width="6.8" height="10.6" fill="#c8c8c8"/>
<rect x="504.07" y="143.3" width="4.6" height="8.4" fill="#008000"/>
<rect x="512.76" y="106.4" width="1.2" height="33.6" fill="#c8c8c8"/>
<rect x="509.96" y="106.2" width="6.8" height="34.0" fill="#c8c8c8"/>
<rect x="511.06" y="107.3" width="4.6" height="31.8" fill="#008000"/>
<rect x="519.74" y="101.0" width="1.2" height="13.0" fill="#c8c8c8"/>
<rect x="516.94" y="100.8" width="6.8" height="5.0" fill="#c8c8c8"/>
<rect x="518.04" y="101.9" width="4.6" height="2.8" fill="#008000"/>
<rect x="526.72" y="98.8" width="1.2" height="21.2" fill="#c8c8c8"/>
<rect x="523.92" y="102.4" width="6.8" height="17.8" fill="#c8c8c8"/>
<rect x="525.02" y="103.5" width="4.6" height="15.6" fill="#ff0000"/>
<rect x="533.71" y="101.0" width="1.2" height="30.4" fill="#c8c8c8"/>
<rect x="530.91" y="100.8" width="6.8" height="19.4" fill="#c8c8c8"/>
<rect x="532.01" y="101.9" width="4.6" height="17.2" fill="#008000"/>
<rect x="540.69" y="91.2" width="1.2" height="19.0" fill="#c8c8c8"/>
<rect x="537.89" y="97.8" width="6.8" height="2.1" fill="#c8c8c8"/>
<rect x="547.68" y="94.2" width="1.2" height="14.4" fill="#c8c8c8"/>
<rect x="544.88" y="99.3" width="6.8" height="9.5" fill="#c8c8c8"/>
<rect x="545.98" y="100.4" width="4.6" height="7.3" fill="#ff0000"/>
<rect x="554.66" y="106.4" width="1.2" height="18.9" fill="#c8c8c8"/>
<rect x="551.86" y="108.4" width="6.8" height="6.5" fill="#c8c8c8"/>
<rect x="552.96" y="109.5" width="4.6" height="4.3" fill="#ff0000"/>
<rect x="561.64" y="82.9" width="1.2" height="33.3" fill="#c8c8c8"/>
<rect x="558.84" y="87.7" width="6.8" height="25.7" fill="#c8c8c8"/>
<rect x="559.94" y="88.8" width="4.6" height="23.5" fill="#008000"/>
<rect x="568.63" y="77.0" width="1.2" height="27.0" fill="#c8c8c8"/>
<rect x="565.83" y="88.1" width="6.8" height="13.4" fill="#c8c8c8"/>
<rect x="566.93" y="89.2" width="4.6" height="11.2" fill="#ff0000"/>
<rect x="575.61" y="83.2" width="1.2" height="20.5" fill="#c8c8c8"/>
<rect x="572.81" y="89.3" width="6.8" height="12.5" fill="#c8c8c8"/>
<rect x="573.91" y="90.4" width="4.6" height="10.3" fill="#008000"/>
<rect x="582.60" y="84.3" width="1.2" height="12.5" fill="#c8c8c8"/>
<rect x="579.80" y="84.1" width="6.8" height="4.7" fill="#c8c8c8"/>
<rect x="580.90" y="85.2" width="4.6" height="2.5" fill="#008000"/>
<rect x="589.58" y="81.1" width="1.2" height="19.8" fill="#c8c8c8"/>
<rect x="586.78" y="85.0" width="6.8" height="11.4" fill="#c8c8c8"/>
<rect x="587.88" y="86.1" width="4.6" height="9.2" fill="#ff0000"/>
<rect x="596.56" y="81.1" width="1.2" height="21.2" fill="#c8c8c8"/>
<rect x="593.76" y="80.9" width="6.8" height="9.3" fill="#c8c8c8"/>
<rect x="594.86" y="82.0" width="4.6" height="7.1" fill="#008000"/>
<rect x="603.55" y="81.1" width="1.2" height="15.7" fill="#c8c8c8"/>
<rect x="600.75" y="83.7" width="6.8" height="10.6" fill="#c8c8c8"/>
<rect x="601.85" y="84.8" width="4.6" height="8.4" fill="#ff0000"/>
<rect x="610.53" y="96.8" width="1.2" height="18.5" fill="#c8c8c8"/>
<rect x="607.73" y="103.7" width="6.8" height="4.9" fill="#c8c8c8"/>
<rect x="608.83" y="104.8" width="4.6" height="2.7" fill="#ff0000"/>
<rect x="617.52" y="109.8" width="1.2" height="19.8" fill="#c8c8c8"/>
<rect x="614.72" y="109.6" width="6.8" height="16.8" fill="#c8c8c8"/>
<rect x="615.82" y="110.7" width="4.6" height="14.6" fill="#ff0000"/>
<rect x="624.50" y="96.8" width="1.2" height="27.2" fill="#c8c8c8"/>
<rect x="621.70" y="99.4" width="6.8" height="22.2" fill="#c8c8c8"/>
<rect x="622.80" y="100.5" width="4.6" height="20.0" fill="#008000"/>
<rect x="631.48" y="95.7" width="1.2" height="10.0" fill="#c8c8c8"/>
<rect x="628.68" y="95.5" width="6.8" height="2.9" fill="#c8c8c8"/>
<rect x="629.78" y="96.6" width="4.6" height="0.7" fill="#008000"/>
<rect x="638.47" y="88.7" width="1.2" height="22.3" fill="#c8c8c8"/>
<rect x="635.67" y="96.4" width="6.8" height="8.0" fill="#c8c8c8"/>
<rect x="636.77" y="97.5" width="4.6" height="5.8" fill="#ff0000"/>
<rect x="645.45" y="98.3" width="1.2" height="12.9" fill="#c8c8c8"/>
<rect x="642.65" y="100.7" width="6.8" height="2.9" fill="#c8c8c8"/>
<rect x="643.75" y="101.8" width="4.6" height="0.7" fill="#008000"/>
<rect x="652.44" y="71.0" width="1.2" height="34.5" fill="#c8c8c8"/>
<rect x="649.64" y="70.8" width="6.8" height="30.0" fill="#c8c8c8"/>
<rect x="650.74" y="71.9" width="4.6" height="27.8" fill="#008000"/>
<rect x="659.42" y="59.4" width="1.2" height="14.7" fill="#c8c8c8"/>
<rect x="656.62" y="59.2" width="6.8" height="11.0" fill="#c8c8c8"/>
<rect x="657.72" y="60.3" width="4.6" height="8.8" fill="#008000"/>
<rect x="666.40" y="52.9" width="1.2" height="34.1" fill="#c8c8c8"/>
<rect x="663.60" y="61.0" width="6.8" height="13.7" fill="#c8c8c8"/>
<rect x="664.70" y="62.1" width="4.6" height="11.5" fill="#ff0000"/>
<rect x="673.39" y="47.9" width="1.2" height="27.7" fill="#c8c8c8"/>
<rect x="670.59" y="47.7" width="6.8" height="25.5" fill="#c8c8c8"/>
<rect x="671.69" y="48.8" width="4.6" height="23.3" fill="#008000"/>
<rect x="680.37" y="49.4" width="1.2" height="24.7" fill="#c8c8c8"/>
<rect x="677.57" y="49.2" width="6.8" height="12.5" fill="#c8c8c8"/>
<rect x="678.67" y="50.3" width="4.6" height="10.3" fill="#ff0000"/>
<rect x="687.36" y="61.2" width="1.2" height="6.8" fill="#c8c8c8"/>
<rect x="684.56" y="63.3" width="6.8" height="4.9" fill="#c8c8c8"/>
<rect x="685.66" y="64.4" width="4.6" height="2.7" fill="#ff0000"/>
<rect x="694.34" y="67.7" width="1.2" height="47.8" fill="#c8c8c8"/>
<rect x="691.54" y="67.5" width="6.8" height="34.3" fill="#c8c8c8"/>
<rect x="692.64" y="68.6" width="4.6" height="32.1" fill="#ff0000"/>
<rect x="701.32" y="93.0" width="1.2" height="13.7" fill="#c8c8c8"/>
<rect x="698.52" y="98.1" width="6.8" height="2.9" fill="#c8c8c8"/>
<rect x="699.62" y="99.2" width="4.6" height="0.7" fill="#008000"/>
<rect x="708.31" y="92.4" width="1.2" height="20.6" fill="#c8c8c8"/>
<rect x="705.51" y="99.3" width="6.8" height="13.9" fill="#c8c8c8"/>
<rect x="706.61" y="100.4" width="4.6" height="11.7" fill="#ff0000"/>
<rect x="715.29" y="112.4" width="1.2" height="35.4" fill="#c8c8c8"/>
<rect x="712.49" y="112.2" width="6.8" height="35.8" fill="#c8c8c8"/>
<rect x="713.59" y="113.3" width="4.6" height="33.6" fill="#ff0000"/>
<rect x="722.28" y="90.3" width="1.2" height="27.0" fill="#c8c8c8"/>
<rect x="719.48" y="92.2" width="6.8" height="25.3" fill="#c8c8c8"/>
<rect x="720.58" y="93.3" width="4.6" height="23.1" fill="#008000"/>
<rect x="729.26" y="88.3" width="1.2" height="24.2" fill="#c8c8c8"/>
<rect x="726.46" y="93.5" width="6.8" height="9.7" fill="#c8c8c8"/>
<rect x="727.56" y="94.6" width="4.6" height="7.5" fill="#ff0000"/>
<rect x="736.24" y="96.7" width="1.2" height="17.5" fill="#c8c8c8"/>
<rect x="733.44" y="103.5" width="6.8" height="3.7" fill="#c8c8c8"/>
<rect x="734.54" y="104.6" width="4.6" height="1.5" fill="#ff0000"/>
<rect x="743.23" y="103.0" width="1.2" height="49.5" fill="#c8c8c8"/>
<rect x="740.43" y="107.8" width="6.8" height="31.1" fill="#c8c8c8"/>
<rect x="741.53" y="108.9" width="4.6" height="28.9" fill="#ff0000"/>
<rect x="750.21" y="130.0" width="1.2" height="26.7" fill="#c8c8c8"/>
<rect x="747.41" y="138.7" width="6.8" height="2.1" fill="#c8c8c8"/>
<rect x="757.20" y="132.5" width="1.2" height="21.7" fill="#c8c8c8"/>
<rect x="754.40" y="132.3" width="6.8" height="4.6" fill="#c8c8c8"/>
<rect x="755.50" y="133.4" width="4.6" height="2.4" fill="#008000"/>
<rect x="764.18" y="120.0" width="1.2" height="18.7" fill="#c8c8c8"/>
<rect x="761.38" y="133.5" width="6.8" height="5.4" fill="#c8c8c8"/>
<rect x="762.48" y="134.6" width="4.6" height="3.2" fill="#ff0000"/>
<rect x="771.16" y="124.2" width="1.2" height="58.8" fill="#c8c8c8"/>
<rect x="768.36" y="139.0" width="6.8" height="44.2" fill="#c8c8c8"/>
<rect x="769.46" y="140.1" width="4.6" height="42.0" fill="#ff0000"/>
<rect x="778.15" y="142.3" width="1.2" height="30.2" fill="#c8c8c8"/>
<rect x="775.35" y="142.1" width="6.8" height="25.1" fill="#c8c8c8"/>
<rect x="776.45" y="143.2" width="4.6" height="22.9" fill="#008000"/>
<rect x="785.13" y="121.7" width="1.2" height="26.5" fill="#c8c8c8"/>
<rect x="782.33" y="137.4" width="6.8" height="5.7" fill="#c8c8c8"/>
<rect x="783.43" y="138.5" width="4.6" height="3.5" fill="#008000"/>
<rect x="792.12" y="124.4" width="1.2" height="15.7" fill="#c8c8c8"/>
<rect x="789.32" y="137.4" width="6.8" height="2.9" fill="#c8c8c8"/>
<rect x="790.42" y="138.5" width="4.6" height="0.7" fill="#ff0000"/>
<rect x="799.10" y="120.6" width="1.2" height="21.6" fill="#c8c8c8"/>
<rect x="796.30" y="120.4" width="6.8" height="18.4" fill="#c8c8c8"/>
<rect x="797.40" y="121.5" width="4.6" height="16.2" fill="#008000"/>
<rect x="806.08" y="117.4" width="1.2" height="7.9" fill="#c8c8c8"/>
<rect x="803.28" y="119.6" width="6.8" height="2.1" fill="#c8c8c8"/>
<rect x="813.07" y="113.8" width="1.2" height="99.7" fill="#c8c8c8"/>
<rect x="810.27" y="122.1" width="6.8" height="80.8" fill="#c8c8c8"/>
<rect x="811.37" y="123.2" width="4.6" height="78.6" fill="#ff0000"/>
<rect x="820.05" y="203.5" width="1.2" height="49.8" fill="#c8c8c8"/>
<rect x="817.25" y="203.3" width="6.8" height="34.1" fill="#c8c8c8"/>
<rect x="818.35" y="204.4" width="4.6" height="31.9" fill="#ff0000"/>
<rect x="827.04" y="220.5" width="1.2" height="15.3" fill="#c8c8c8"/>
<rect x="824.24" y="220.3" width="6.8" height="15.7" fill="#c8c8c8"/>
<rect x="825.34" y="221.4" width="4.6" height="13.5" fill="#008000"/>
<rect x="834.02" y="264.2" width="1.2" height="27.5" fill="#c8c8c8"/>
<rect x="831.22" y="269.8" width="6.8" height="2.1" fill="#c8c8c8"/>
<rect x="841.00" y="230.0" width="1.2" height="40.0" fill="#c8c8c8"/>
<rect x="838.20" y="235.6" width="6.8" height="34.6" fill="#c8c8c8"/>
<rect x="839.30" y="236.7" width="4.6" height="32.4" fill="#008000"/>
<rect x="847.99" y="235.3" width="1.2" height="24.7" fill="#c8c8c8"/>
<rect x="845.19" y="237.3" width="6.8" height="13.7" fill="#c8c8c8"/>
<rect x="846.29" y="238.4" width="4.6" height="11.5" fill="#ff0000"/>
<rect x="854.97" y="252.0" width="1.2" height="20.0" fill="#c8c8c8"/>
<rect x="852.17" y="251.8" width="6.8" height="11.4" fill="#c8c8c8"/>
<rect x="853.27" y="252.9" width="4.6" height="9.2" fill="#ff0000"/>
<rect x="861.96" y="252.5" width="1.2" height="18.8" fill="#c8c8c8"/>
<rect x="859.16" y="261.8" width="6.8" height="9.7" fill="#c8c8c8"/>
<rect x="860.26" y="262.9" width="4.6" height="7.5" fill="#ff0000"/>
<rect x="868.94" y="244.7" width="1.2" height="25.1" fill="#c8c8c8"/>
<rect x="866.14" y="244.5" width="6.8" height="25.5" fill="#c8c8c8"/>
<rect x="867.24" y="245.6" width="4.6" height="23.3" fill="#008000"/>
<rect x="875.92" y="231.0" width="1.2" height="40.2" fill="#c8c8c8"/>
<rect x="873.12" y="243.4" width="6.8" height="28.0" fill="#c8c8c8"/>
<rect x="874.22" y="244.5" width="4.6" height="25.8" fill="#ff0000"/>
<rect x="882.91" y="269.7" width="1.2" height="25.9" fill="#c8c8c8"/>
<rect x="880.11" y="271.6" width="6.8" height="24.2" fill="#c8c8c8"/>
<rect x="881.21" y="272.7" width="4.6" height="22.0" fill="#ff0000"/>
<rect x="889.89" y="252.7" width="1.2" height="25.6" fill="#c8c8c8"/>
<rect x="887.09" y="260.6" width="6.8" height="13.6" fill="#c8c8c8"/>
<rect x="888.19" y="261.7" width="4.6" height="11.4" fill="#008000"/>
<rect x="896.88" y="247.0" width="1.2" height="19.5" fill="#c8c8c8"/>
<rect x="894.08" y="251.9" width="6.8" height="8.2" fill="#c8c8c8"/>
<rect x="895.18" y="253.0" width="4.6" height="6.0" fill="#008000"/>
<rect x="903.86" y="232.6" width="1.2" height="25.3" fill="#c8c8c8"/>
<rect x="901.06" y="239.0" width="6.8" height="13.9" fill="#c8c8c8"/>
<rect x="902.16" y="240.1" width="4.6" height="11.7" fill="#008000"/>
<rect x="910.84" y="223.9" width="1.2" height="19.9" fill="#c8c8c8"/>
<rect x="908.04" y="238.5" width="6.8" height="2.1" fill="#c8c8c8"/>
<rect x="917.83" y="233.7" width="1.2" height="11.8" fill="#c8c8c8"/>
<rect x="915.03" y="239.0" width="6.8" height="6.7" fill="#c8c8c8"/>
<rect x="916.13" y="240.1" width="4.6" height="4.5" fill="#ff0000"/>
<rect x="924.81" y="223.9" width="1.2" height="30.2" fill="#c8c8c8"/>
<rect x="922.01" y="245.7" width="6.8" height="8.6" fill="#c8c8c8"/>
<rect x="923.11" y="246.8" width="4.6" height="6.4" fill="#ff0000"/>
<rect x="931.80" y="238.0" width="1.2" height="17.3" fill="#c8c8c8"/>
<rect x="929.00" y="254.3" width="6.8" height="2.1" fill="#c8c8c8"/>
<rect x="938.78" y="249.5" width="1.2" height="13.3" fill="#c8c8c8"/>
<rect x="935.98" y="254.4" width="6.8" height="8.6" fill="#c8c8c8"/>
<rect x="937.08" y="255.5" width="4.6" height="6.4" fill="#ff0000"/>
</g>
<g>
<rect x="65" y="441" width="955" height="1" fill="#5c5c5c" shape-rendering="crispEdges"/>
<rect x="65" y="442" width="955" height="16" fill="#232323" shape-rendering="crispEdges"/>
<rect x="65" y="458" width="955" height="1" fill="#5c5c5c" shape-rendering="crispEdges"/>
<rect x="65" y="459" width="955" height="18" fill="#232323" shape-rendering="crispEdges"/>
<rect x="66.50" y="441" width="1.1" height="17" fill="#5c5c5c"/>
<text x="70.5" y="455.2" font-size="14" fill="#ffffff" textLength="36.4" lengthAdjust="spacingAndGlyphs">11:59</text>
<rect x="129.35" y="441" width="1.1" height="17" fill="#5c5c5c"/>
<text x="133.35" y="455.2" font-size="14" fill="#ffffff" textLength="36.4" lengthAdjust="spacingAndGlyphs">12:59</text>
<rect x="192.20" y="441" width="1.1" height="17" fill="#5c5c5c"/>
<text x="196.2" y="455.2" font-size="14" fill="#ffffff" textLength="36.4" lengthAdjust="spacingAndGlyphs">13:59</text>
<rect x="255.05" y="441" width="1.1" height="17" fill="#5c5c5c"/>
<text x="259.05" y="455.2" font-size="14" fill="#ffffff" textLength="36.4" lengthAdjust="spacingAndGlyphs">14:59</text>
<rect x="317.90" y="441" width="1.1" height="17" fill="#5c5c5c"/>
<text x="321.9" y="455.2" font-size="14" fill="#ffffff" textLength="36.4" lengthAdjust="spacingAndGlyphs">15:59</text>
<rect x="380.75" y="441" width="1.1" height="17" fill="#5c5c5c"/>
<text x="384.75" y="455.2" font-size="14" fill="#ffffff" textLength="36.4" lengthAdjust="spacingAndGlyphs">16:24</text>
<rect x="443.60" y="441" width="1.1" height="17" fill="#5c5c5c"/>
<text x="447.6" y="455.2" font-size="14" fill="#ffffff" textLength="28.5" lengthAdjust="spacingAndGlyphs">9:59</text>
<rect x="506.45" y="441" width="1.1" height="17" fill="#5c5c5c"/>
<text x="510.45" y="455.2" font-size="14" fill="#ffffff" textLength="36.4" lengthAdjust="spacingAndGlyphs">10:59</text>
<rect x="569.30" y="441" width="1.1" height="17" fill="#5c5c5c"/>
<text x="573.3" y="455.2" font-size="14" fill="#ffffff" textLength="36.4" lengthAdjust="spacingAndGlyphs">11:59</text>
<rect x="632.15" y="441" width="1.1" height="17" fill="#5c5c5c"/>
<text x="636.15" y="455.2" font-size="14" fill="#ffffff" textLength="36.4" lengthAdjust="spacingAndGlyphs">12:59</text>
<rect x="695.00" y="441" width="1.1" height="17" fill="#5c5c5c"/>
<text x="699.0" y="455.2" font-size="14" fill="#ffffff" textLength="36.4" lengthAdjust="spacingAndGlyphs">13:59</text>
<rect x="757.85" y="441" width="1.1" height="17" fill="#5c5c5c"/>
<text x="761.85" y="455.2" font-size="14" fill="#ffffff" textLength="36.4" lengthAdjust="spacingAndGlyphs">14:59</text>
<rect x="820.70" y="441" width="1.1" height="17" fill="#5c5c5c"/>
<text x="824.7" y="455.2" font-size="14" fill="#ffffff" textLength="36.4" lengthAdjust="spacingAndGlyphs">15:59</text>
<rect x="883.55" y="441" width="1.1" height="17" fill="#5c5c5c"/>
<text x="887.5500000000001" y="455.2" font-size="14" fill="#ffffff" textLength="36.4" lengthAdjust="spacingAndGlyphs">16:22</text>
<rect x="66.50" y="458" width="1.1" height="19" fill="#5c5c5c"/>
<text x="70.0" y="473.8" font-size="14" fill="#ffffff" textLength="38.0" lengthAdjust="spacingAndGlyphs">21 sie</text>
<rect x="122.42" y="458" width="1.1" height="19" fill="#5c5c5c"/>
<text x="125.92" y="473.8" font-size="14" fill="#ffffff" textLength="38.0" lengthAdjust="spacingAndGlyphs">22 sie</text>
<rect x="178.34" y="458" width="1.1" height="19" fill="#5c5c5c"/>
<text x="181.84" y="473.8" font-size="14" fill="#ffffff" textLength="38.0" lengthAdjust="spacingAndGlyphs">23 sie</text>
<rect x="234.26" y="458" width="1.1" height="19" fill="#5c5c5c"/>
<text x="237.76" y="473.8" font-size="14" fill="#ffffff" textLength="38.0" lengthAdjust="spacingAndGlyphs">24 sie</text>
<rect x="290.18" y="458" width="1.1" height="19" fill="#5c5c5c"/>
<text x="293.68" y="473.8" font-size="14" fill="#ffffff" textLength="38.0" lengthAdjust="spacingAndGlyphs">27 sie</text>
<rect x="346.10" y="458" width="1.1" height="19" fill="#5c5c5c"/>
<text x="349.6" y="473.8" font-size="14" fill="#ffffff" textLength="38.0" lengthAdjust="spacingAndGlyphs">28 sie</text>
<rect x="402.02" y="458" width="1.1" height="19" fill="#5c5c5c"/>
<text x="405.52" y="473.8" font-size="14" fill="#ffffff" textLength="38.0" lengthAdjust="spacingAndGlyphs">29 sie</text>
<rect x="457.94" y="458" width="1.1" height="19" fill="#5c5c5c"/>
<text x="461.44" y="473.8" font-size="14" fill="#ffffff" textLength="38.0" lengthAdjust="spacingAndGlyphs">30 sie</text>
<rect x="513.86" y="458" width="1.1" height="19" fill="#5c5c5c"/>
<text x="517.36" y="473.8" font-size="14" fill="#ffffff" textLength="38.0" lengthAdjust="spacingAndGlyphs">31 sie</text>
<rect x="569.78" y="458" width="1.1" height="19" fill="#5c5c5c"/>
<text x="573.28" y="473.8" font-size="14" fill="#ffffff" textLength="30.0" lengthAdjust="spacingAndGlyphs">3 wrz</text>
<rect x="625.70" y="458" width="1.1" height="19" fill="#5c5c5c"/>
<text x="629.2" y="473.8" font-size="14" fill="#ffffff" textLength="30.0" lengthAdjust="spacingAndGlyphs">4 wrz</text>
<rect x="681.62" y="458" width="1.1" height="19" fill="#5c5c5c"/>
<text x="685.12" y="473.8" font-size="14" fill="#ffffff" textLength="30.0" lengthAdjust="spacingAndGlyphs">5 wrz</text>
<rect x="737.54" y="458" width="1.1" height="19" fill="#5c5c5c"/>
<text x="741.04" y="473.8" font-size="14" fill="#ffffff" textLength="30.0" lengthAdjust="spacingAndGlyphs">6 wrz</text>
<rect x="793.46" y="458" width="1.1" height="19" fill="#5c5c5c"/>
<text x="796.96" y="473.8" font-size="14" fill="#ffffff" textLength="30.0" lengthAdjust="spacingAndGlyphs">7 wrz</text>
<rect x="849.38" y="458" width="1.1" height="19" fill="#5c5c5c"/>
<text x="852.88" y="473.8" font-size="14" fill="#ffffff" textLength="38.0" lengthAdjust="spacingAndGlyphs">10 wrz</text>
<rect x="905.30" y="458" width="1.1" height="19" fill="#5c5c5c"/>
<text x="908.8000000000001" y="473.8" font-size="14" fill="#ffffff" textLength="38.0" lengthAdjust="spacingAndGlyphs">11 wrz</text>
</g>
<rect x="62" y="62.7" width="4" height="1.6" fill="#5c5c5c"/>
<text x="23.6" y="62.7" font-size="14.2" fill="#ffffff" textLength="33.8" lengthAdjust="spacingAndGlyphs">3640</text>
<rect x="62" y="86.2" width="4" height="1.6" fill="#5c5c5c"/>
<text x="23.6" y="86.23" font-size="14.2" fill="#ffffff" textLength="33.8" lengthAdjust="spacingAndGlyphs">3620</text>
<rect x="62" y="109.8" width="4" height="1.6" fill="#5c5c5c"/>
<text x="23.6" y="109.76" font-size="14.2" fill="#ffffff" textLength="33.8" lengthAdjust="spacingAndGlyphs">3600</text>
<rect x="62" y="133.3" width="4" height="1.6" fill="#5c5c5c"/>
<text x="23.6" y="133.29" font-size="14.2" fill="#ffffff" textLength="33.8" lengthAdjust="spacingAndGlyphs">3580</text>
<rect x="62" y="156.8" width="4" height="1.6" fill="#5c5c5c"/>
<text x="23.6" y="156.82" font-size="14.2" fill="#ffffff" textLength="33.8" lengthAdjust="spacingAndGlyphs">3560</text>
<rect x="62" y="180.3" width="4" height="1.6" fill="#5c5c5c"/>
<text x="23.6" y="180.35" font-size="14.2" fill="#ffffff" textLength="33.8" lengthAdjust="spacingAndGlyphs">3540</text>
<rect x="62" y="203.9" width="4" height="1.6" fill="#5c5c5c"/>
<text x="23.6" y="203.88" font-size="14.2" fill="#ffffff" textLength="33.8" lengthAdjust="spacingAndGlyphs">3520</text>
<rect x="62" y="227.4" width="4" height="1.6" fill="#5c5c5c"/>
<text x="23.6" y="227.41" font-size="14.2" fill="#ffffff" textLength="33.8" lengthAdjust="spacingAndGlyphs">3500</text>
<rect x="62" y="250.9" width="4" height="1.6" fill="#5c5c5c"/>
<text x="23.6" y="250.94" font-size="14.2" fill="#ffffff" textLength="33.8" lengthAdjust="spacingAndGlyphs">3480</text>
<rect x="62" y="274.5" width="4" height="1.6" fill="#5c5c5c"/>
<text x="23.6" y="274.47" font-size="14.2" fill="#ffffff" textLength="33.8" lengthAdjust="spacingAndGlyphs">3460</text>
<rect x="62" y="298.0" width="4" height="1.6" fill="#5c5c5c"/>
<text x="23.6" y="298.0" font-size="14.2" fill="#ffffff" textLength="33.8" lengthAdjust="spacingAndGlyphs">3440</text>
<rect x="62" y="321.5" width="4" height="1.6" fill="#5c5c5c"/>
<text x="23.6" y="321.53000000000003" font-size="14.2" fill="#ffffff" textLength="33.8" lengthAdjust="spacingAndGlyphs">3420</text>
<rect x="62" y="345.1" width="4" height="1.6" fill="#5c5c5c"/>
<text x="23.6" y="345.06" font-size="14.2" fill="#ffffff" textLength="33.8" lengthAdjust="spacingAndGlyphs">3400</text>
<rect x="62" y="368.6" width="4" height="1.6" fill="#5c5c5c"/>
<text x="23.6" y="368.59" font-size="14.2" fill="#ffffff" textLength="33.8" lengthAdjust="spacingAndGlyphs">3380</text>
<rect x="62" y="392.1" width="4" height="1.6" fill="#5c5c5c"/>
<text x="23.6" y="392.12" font-size="14.2" fill="#ffffff" textLength="33.8" lengthAdjust="spacingAndGlyphs">3360</text>
<rect x="62" y="415.6" width="4" height="1.6" fill="#5c5c5c"/>
<text x="23.6" y="415.65" font-size="14.2" fill="#ffffff" textLength="33.8" lengthAdjust="spacingAndGlyphs">3340</text>
<rect x="62" y="439.2" width="4" height="1.6" fill="#5c5c5c"/>
<text x="23.6" y="439.18" font-size="14.2" fill="#ffffff" textLength="33.8" lengthAdjust="spacingAndGlyphs">3320</text>
<rect x="955" y="57" width="58" height="13" fill="#232323"/>
<rect x="955" y="80" width="45" height="13" fill="#232323"/>
<text x="956.6" y="68.7" font-size="13.5" fill="#ff8c00" textLength="55.4" lengthAdjust="spacingAndGlyphs">3470.49</text>
<text x="956.6" y="92.2" font-size="13.5" fill="#2a9df4" textLength="42.8" lengthAdjust="spacingAndGlyphs">88798</text>
<text x="703" y="161" font-size="14" fill="#f0f000">1</text>
<text x="728.5" y="67.3" font-size="14" fill="#f0f000">2</text>
<text x="881" y="310" font-size="14" fill="#f0f000">3</text>
<text x="941.5" y="186" font-size="14" fill="#f0f000">4</text>
<line x1="62" y1="550.8" x2="1016" y2="550.8" stroke="#5c5c5c" stroke-width="1.6" stroke-dasharray="4.3 4.3"/>
<line x1="62" y1="575.8" x2="1016" y2="575.8" stroke="#5c5c5c" stroke-width="1.6" stroke-dasharray="4.3 4.3"/>
<line x1="62" y1="625.7" x2="1016" y2="625.7" stroke="#5c5c5c" stroke-width="1.6" stroke-dasharray="4.3 4.3"/>
<line x1="62" y1="650.6" x2="1016" y2="650.6" stroke="#5c5c5c" stroke-width="1.6" stroke-dasharray="4.3 4.3"/>
<text x="40.599999999999994" y="549.9000000000001" font-size="13.5" fill="#ffffff" textLength="16.8" lengthAdjust="spacingAndGlyphs">40</text>
<text x="40.599999999999994" y="574.85" font-size="13.5" fill="#ffffff" textLength="16.8" lengthAdjust="spacingAndGlyphs">20</text>
<text x="49.2" y="599.8000000000001" font-size="13.5" fill="#ffffff" textLength="8.2" lengthAdjust="spacingAndGlyphs">0</text>
<text x="33.4" y="624.7500000000001" font-size="13.5" fill="#ffffff" textLength="24.0" lengthAdjust="spacingAndGlyphs">-20</text>
<text x="33.4" y="649.7" font-size="13.5" fill="#ffffff" textLength="24.0" lengthAdjust="spacingAndGlyphs">-40</text>
<rect x="65" y="600.1" width="882.3" height="1.6" fill="#a8a8a8"/>
<rect x="955" y="543" width="45" height="13" fill="#232323"/>
<rect x="955" y="567" width="45" height="13" fill="#232323"/>
<text x="956.6" y="554.4" font-size="13.5" fill="#00e000" textLength="42.4" lengthAdjust="spacingAndGlyphs">-22.40</text>
<text x="956.6" y="579" font-size="13.5" fill="#e8e8e8" textLength="42.4" lengthAdjust="spacingAndGlyphs">-28.32</text>
<polyline points="66.5,621.4 74.7,619.0 80.2,618.3 89.3,617.9 98.4,616.8 105.6,616.8 114.7,614.5 123.8,612.3 132.9,608.6 143.8,601.4 151.1,596.8 163.8,586.8 178.4,574.6 194.7,562.3 202.0,557.7 209.3,554.1 216.5,551.4 222.0,549.5 235.6,551.0 242.9,552.3 250.2,554.1 257.5,555.9 264.7,557.2 272.0,558.3 292.0,558.3 299.3,556.8 310.2,555.9 328.4,555.4 333.8,557.2 341.1,560.5 348.4,563.2 357.5,566.8 362.9,570.5 369.3,573.5 382.0,580.5 389.3,585.0 396.5,588.6 403.8,592.3 411.1,595.9 417.5,598.3 424.7,600.1 432.9,602.6 442.0,603.7 451.1,603.7 454.7,601.9 465.6,599.5 478.4,598.3 503.8,598.3 514.7,599.5 530.2,599.5 537.5,596.8 550.2,591.7 562.9,586.8 573.8,583.7 581.1,581.4 588.4,579.5 606.5,578.3 613.8,578.3 621.1,579.5 635.6,579.5 642.9,581.4 650.2,582.6 662.0,583.7 694.7,583.7 712.9,585.0 727.5,587.4 738.4,589.9 747.5,592.8 758.4,596.8 767.5,600.1 774.7,601.9 782.0,604.1 792.9,606.8 803.8,608.6 810.9,610.5 822.7,612.8 836.4,617.7 850.9,624.1 865.5,629.5 880.0,636.5 892.7,639.5 905.5,640.8 914.5,640.8 927.3,638.3 936.4,636.5" fill="none" stroke="#e8e8e8" stroke-width="1.3" stroke-dasharray="3.5 4.5"/>
<polyline points="66.5,620.5 74.7,618.3 79.3,615.4 84.7,613.5 90.2,613.5 93.8,612.3 97.5,612.3 101.1,614.1 105.6,611.0 111.1,607.2 116.5,604.5 122.0,601.4 127.5,597.7 133.8,592.3 137.5,589.5 142.0,583.7 149.3,575.9 153.8,572.3 159.3,566.8 165.6,559.5 172.9,553.5 178.4,550.8 185.6,546.8 195.6,546.8 202.0,548.1 209.3,549.5 214.7,551.7 219.3,553.5 226.5,555.9 233.8,558.3 240.2,559.5 246.5,561.0 257.5,561.0 261.1,562.6 266.5,559.5 273.8,556.3 281.1,553.2 286.5,551.0 297.5,551.0 306.5,554.1 313.8,557.7 322.9,562.3 333.8,572.3 342.9,576.8 353.8,581.4 362.9,583.2 369.3,585.9 378.4,592.8 387.5,601.9 393.8,605.0 400.2,606.8 430.2,606.8 438.4,599.0 445.6,594.1 456.5,590.5 465.6,593.5 474.7,598.6 485.6,604.1 493.8,608.6 505.6,602.3 511.1,597.7 516.5,592.3 520.2,589.5 530.2,587.4 539.3,583.2 546.5,580.8 559.3,580.8 561.1,579.5 573.8,579.5 581.1,576.8 586.5,576.8 590.2,578.6 595.6,576.8 601.1,576.8 610.2,579.5 619.3,583.7 630.2,585.5 642.9,585.5 646.5,586.8 650.2,586.8 657.5,582.6 669.3,582.6 672.9,580.8 679.3,579.5 684.7,579.5 692.9,582.6 702.0,586.8 709.3,589.9 716.5,595.0 725.6,595.0 734.7,597.7 742.0,600.1 749.3,603.7 758.4,605.0 765.6,606.8 772.9,612.3 796.5,612.3 800.2,610.5 804.7,609.5 810.9,612.3 816.4,617.7 822.7,622.3 827.3,625.0 835.5,632.3 843.6,635.9 849.1,638.3 858.2,639.5 863.6,642.3 869.1,640.5 874.5,640.8 883.6,645.0 894.5,642.3 903.6,637.7 914.5,633.2 923.6,631.0 930.9,629.5 939.1,627.7" fill="none" stroke="#00e000" stroke-width="1.25"/>
</svg></body></html>
